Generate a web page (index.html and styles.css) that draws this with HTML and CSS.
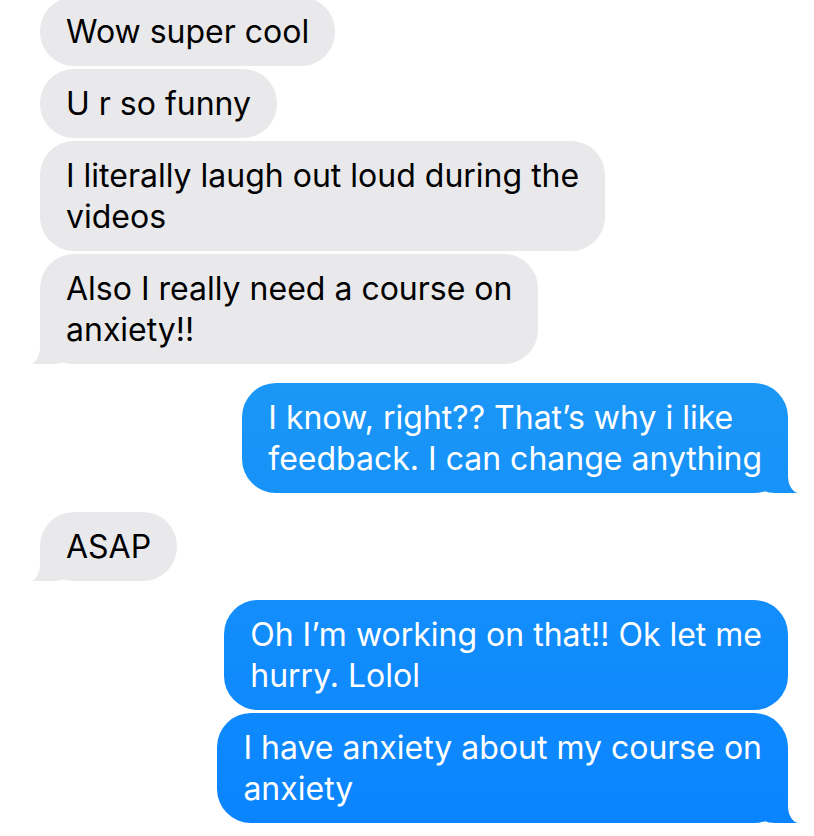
FILE: index.html
```html
<!DOCTYPE html>
<html lang="en">
<head>
  <meta charset="UTF-8">
  <title>Messages</title>
  <link rel="stylesheet" href="styles.css">
</head>
<body>
  <div class="thread">
    <div class="group received">
      <p class="bubble">Wow super cool</p>
      <p class="bubble">U r so funny</p>
      <p class="bubble">I literally laugh out loud during the<br>videos</p>
      <p class="bubble tail">Also I really need a course on<br>anxiety!!</p>
    </div>

    <div class="group sent">
      <p class="bubble tail">I know, right?? That’s why i like<br>feedback. I can change anything</p>
    </div>

    <div class="group received">
      <p class="bubble tail">ASAP</p>
    </div>

    <div class="group sent">
      <p class="bubble">Oh I’m working on that!! Ok let me<br>hurry. Lolol</p>
      <p class="bubble tail">I have anxiety about my course on<br>anxiety</p>
    </div>
  </div>
</body>
</html>
```

FILE: styles.css
```css
body {
  margin: 0;
  background: #fff;
  font-family: Inter, "Noto Sans", sans-serif;
}

.thread {
  display: flex;
  flex-direction: column;
  gap: 19px;
  margin-top: -3px;
  padding: 0 26px 0 40px;
}

.group {
  display: flex;
  flex-direction: column;
  gap: 3px;
}
.group.received { align-items: flex-start; }
.group.sent { align-items: flex-end; }

.bubble {
  position: relative;
  isolation: isolate;
  margin: 0;
  padding: 14px 26px;
  border-radius: 34px;
  font-size: 32px;
  line-height: 41px;
  white-space: nowrap;
}

.received .bubble {
  background: #e9e9eb;
  color: #000;
}

.sent .bubble {
  background: linear-gradient(180deg, #2ba6f3 0px, #1a96f7 400px, #0a84ff 836px) fixed;
  color: #fff;
}

/* tails */
.bubble.tail::before,
.bubble.tail::after {
  content: "";
  position: absolute;
  z-index: -1;
  bottom: 0;
  height: 34px;
}

.received .bubble.tail::before {
  left: -10px;
  width: 40px;
  background: #e9e9eb;
  border-bottom-right-radius: 16px 8px;
}
.received .bubble.tail::after {
  left: -26px;
  width: 26px;
  background: #fff;
  border-bottom-right-radius: 10px 17px;
}

.sent .bubble.tail::before {
  right: -11px;
  width: 40px;
  background: linear-gradient(180deg, #2ba6f3 0px, #1a96f7 400px, #0a84ff 836px) fixed;
  border-bottom-left-radius: 16px 8px;
}
.sent .bubble.tail::after {
  right: -26px;
  width: 26px;
  background: #fff;
  border-bottom-left-radius: 11px 17px;
}
```
